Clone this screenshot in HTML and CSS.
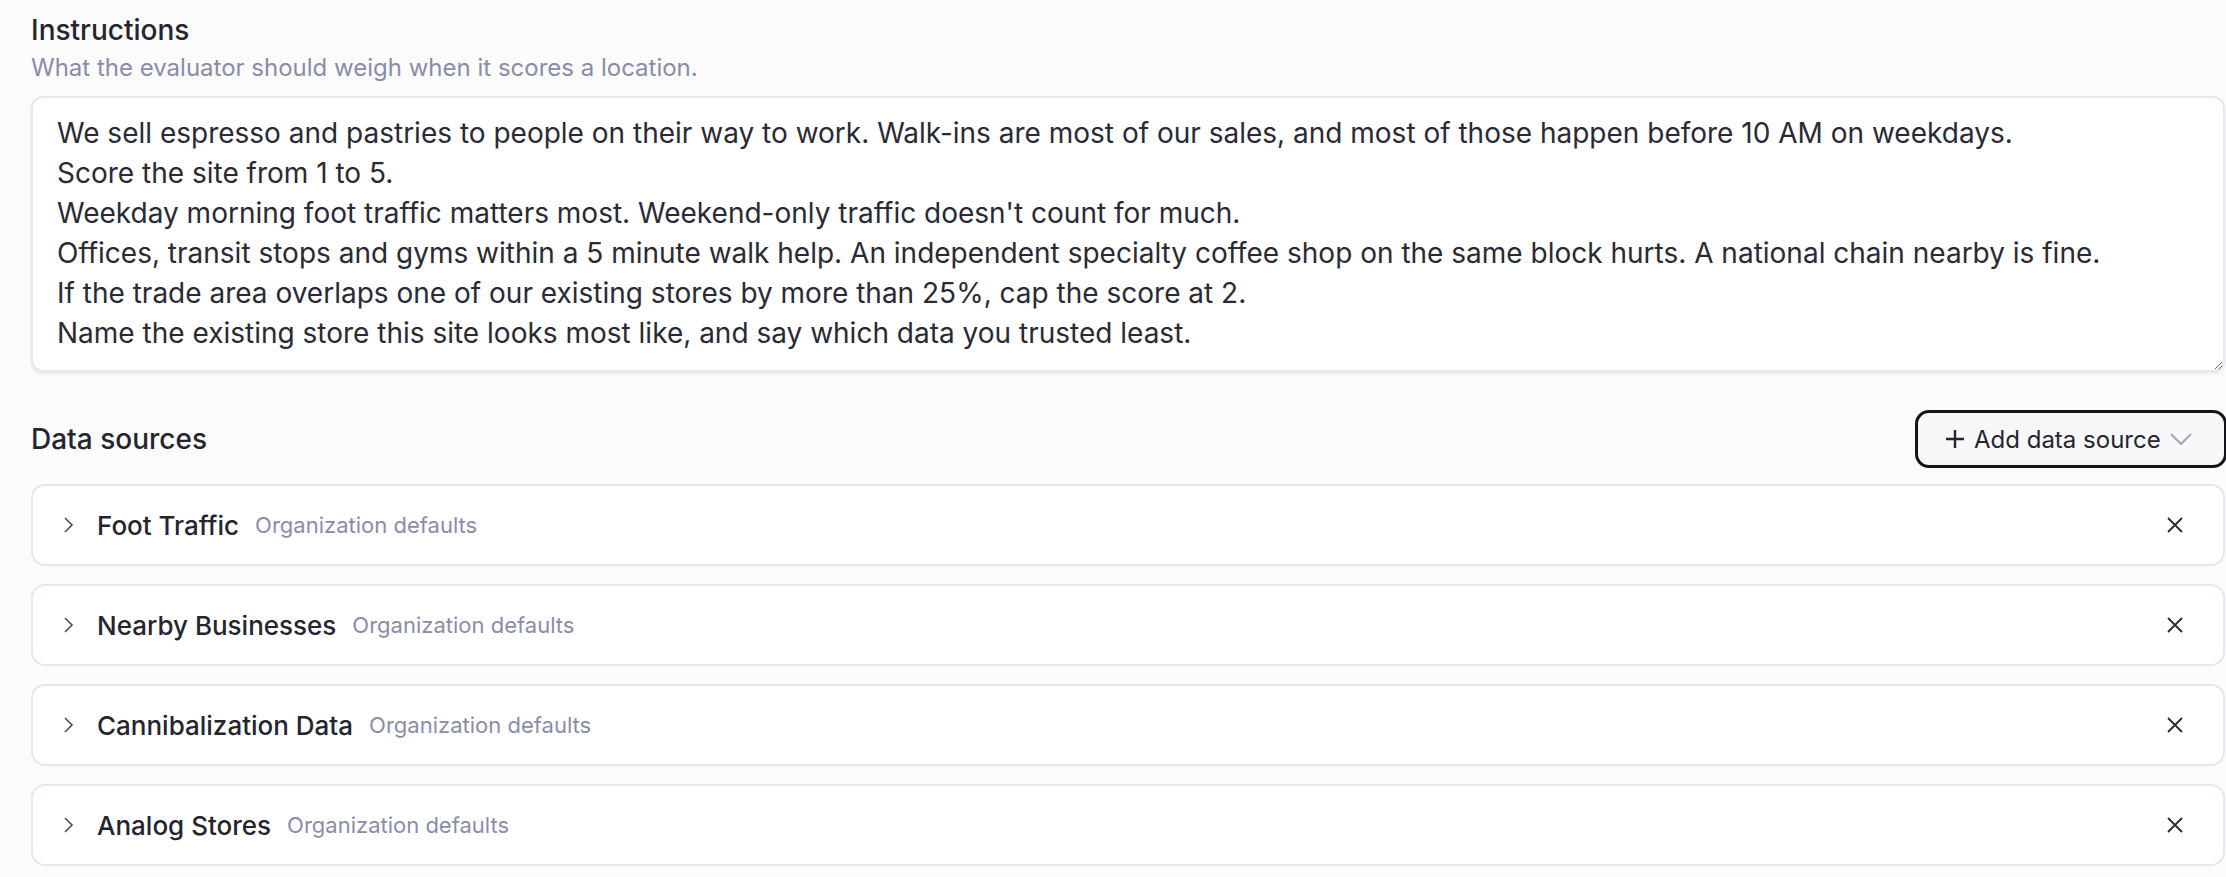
FILE: index.html
```html
<!DOCTYPE html>
<html>
  <head>
    <link rel="stylesheet" href="styles.css">
  </head>
  <body>
    <section class="field">
      <h2 class="label">Instructions</h2>
      <p class="hint">What the evaluator should weigh when it scores a location.</p>
      <textarea class="prompt" rows="6">We sell espresso and pastries to people on their way to work. Walk-ins are most of our sales, and most of those happen before 10 AM on weekdays.
Score the site from 1 to 5.
Weekday morning foot traffic matters most. Weekend-only traffic doesn't count for much.
Offices, transit stops and gyms within a 5 minute walk help. An independent specialty coffee shop on the same block hurts. A national chain nearby is fine.
If the trade area overlaps one of our existing stores by more than 25%, cap the score at 2.
Name the existing store this site looks most like, and say which data you trusted least.</textarea>
    </section>

    <section class="field sources">
      <div class="row head">
        <h2 class="label">Data sources</h2>
        <div class="grow"></div>
        <button class="add">
          <svg width="20" height="20" viewBox="0 0 20 20" class="plus">
            <path d="M10 1v18M1 10h18"></path>
          </svg>
          <span>Add data source</span>
          <svg width="22" height="12" viewBox="0 0 22 12" class="caret">
            <path d="M1 1l10 10 10-10"></path>
          </svg>
        </button>
      </div>

      <div class="source">
        <svg width="12" height="16" viewBox="0 0 12 16" class="chev"><path d="M2 1l7 7-7 7"></path></svg>
        <span class="name">Foot Traffic</span>
        <span class="meta">Organization defaults</span>
        <div class="grow"></div>
        <svg width="16" height="16" viewBox="0 0 16 16" class="close"><path d="M1 1l14 14M15 1L1 15"></path></svg>
      </div>
      <div class="source">
        <svg width="12" height="16" viewBox="0 0 12 16" class="chev"><path d="M2 1l7 7-7 7"></path></svg>
        <span class="name">Nearby Businesses</span>
        <span class="meta">Organization defaults</span>
        <div class="grow"></div>
        <svg width="16" height="16" viewBox="0 0 16 16" class="close"><path d="M1 1l14 14M15 1L1 15"></path></svg>
      </div>
      <div class="source">
        <svg width="12" height="16" viewBox="0 0 12 16" class="chev"><path d="M2 1l7 7-7 7"></path></svg>
        <span class="name">Cannibalization Data</span>
        <span class="meta">Organization defaults</span>
        <div class="grow"></div>
        <svg width="16" height="16" viewBox="0 0 16 16" class="close"><path d="M1 1l14 14M15 1L1 15"></path></svg>
      </div>
      <div class="source">
        <svg width="12" height="16" viewBox="0 0 12 16" class="chev"><path d="M2 1l7 7-7 7"></path></svg>
        <span class="name">Analog Stores</span>
        <span class="meta">Organization defaults</span>
        <div class="grow"></div>
        <svg width="16" height="16" viewBox="0 0 16 16" class="close"><path d="M1 1l14 14M15 1L1 15"></path></svg>
      </div>
    </section>
  </body>
</html>
```

FILE: styles.css
```css
* {
  margin: 0;
  padding: 0;
  box-sizing: border-box;
}

body {
  background: #fbfbfc;
  color: #25252f;
  font-family: Inter, "Noto Sans", sans-serif;
  font-size: 28px;
  padding: 10px 1px 0 31px;
}

.label {
  font-size: 28px;
  font-weight: 500;
  line-height: 40px;
}

.hint {
  color: #8a8ca8;
  font-size: 24px;
  line-height: 36px;
  margin-bottom: 10px;
}

.prompt {
  display: block;
  width: 100%;
  height: 276px;
  padding: 15px 24px;
  font-family: inherit;
  font-size: 28px;
  line-height: 40px;
  color: #2a2a35;
  background: #fff;
  border: 2px solid #e6e7ef;
  border-radius: 12px;
  box-shadow: 0 2px 3px rgba(30, 30, 60, 0.08);
  resize: vertical;
  outline: none;
}

.sources {
  margin-top: 38px;
}

.row {
  display: flex;
  flex-direction: row;
  align-items: center;
}

.grow {
  flex-grow: 1;
}

.head {
  height: 58px;
  margin-bottom: 16px;
}

.add {
  display: flex;
  align-items: center;
  height: 58px;
  width: 312px;
  margin-right: -2px;
  padding: 0 0 0 27px;
  white-space: nowrap;
  font-family: inherit;
  font-size: 24px;
  color: #25252f;
  background: #f8f8fb;
  border: 3px solid #14141c;
  border-radius: 14px;
}

.add span {
  margin-left: 9px;
}

.plus {
  stroke: #25252f;
  stroke-width: 2.4;
  fill: none;
}

.caret {
  stroke: #a3a5b6;
  stroke-width: 2;
  fill: none;
  margin-left: 9px;
}

.source {
  display: flex;
  align-items: center;
  height: 82px;
  margin-bottom: 18px;
  padding: 0 40px 0 30px;
  background: #fff;
  border: 2px solid #e6e7ef;
  border-radius: 14px;
}

.chev {
  stroke: #4a4c66;
  stroke-width: 1.6;
  fill: none;
  margin-right: 22px;
}

.name {
  font-weight: 500;
  font-size: 26px;
}

.meta {
  color: #8a8ca8;
  font-size: 22px;
  margin-left: 16px;
}

.close {
  stroke: #2a2a33;
  stroke-width: 1.8;
  fill: none;
}
```
